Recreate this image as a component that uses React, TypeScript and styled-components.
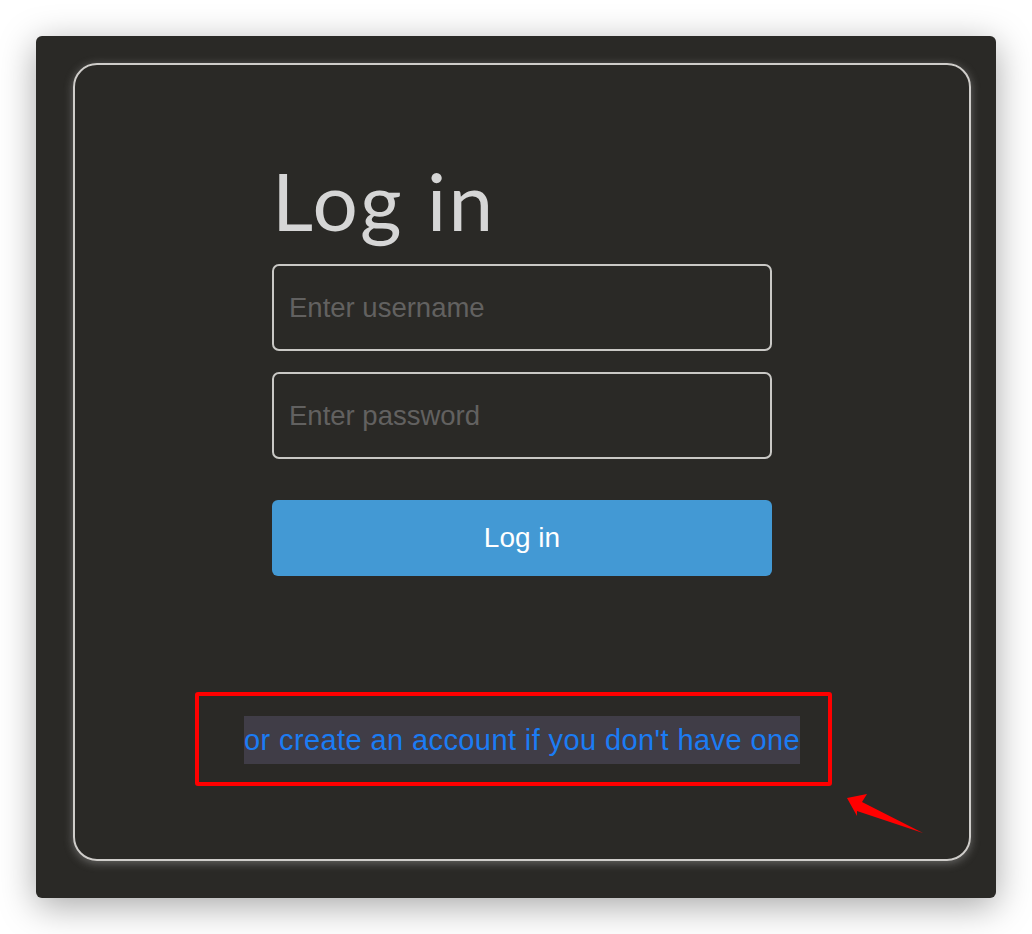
import React from "react";
import styled, { createGlobalStyle } from "styled-components";

const Global = createGlobalStyle`
  html, body { margin: 0; padding: 0; background: #ffffff; }
  body { font-family: "Liberation Sans", Arial, sans-serif; }
  * { box-sizing: border-box; }
`;

const Page = styled.div`
  padding: 36px;
  width: 1032px;
  height: 934px;
`;

const Window = styled.div`
  position: relative;
  width: 960px;
  height: 862px;
  background: #2a2926;
  border-radius: 6px;
  box-shadow: 0 8px 36px rgba(0, 0, 0, 0.35);
  padding: 27px 25px 37px 37px;
`;

const Card = styled.div`
  width: 898px;
  height: 798px;
  border: 2px solid #cfcdca;
  border-radius: 24px;
  box-shadow: 0 2px 10px rgba(220, 220, 220, 0.35);
  display: flex;
  flex-direction: column;
  align-items: center;
  padding-top: 87px;
`;

const Form = styled.form`
  width: 500px;
  display: flex;
  flex-direction: column;
`;

const Title = styled.h1`
  margin: 0 0 16px 0;
  font-family: Lato, "Open Sans", sans-serif;
  font-weight: 400;
  font-size: 80px;
  line-height: 96px;
  color: #d6d6d6;
  letter-spacing: 2.4px;
`;

const Input = styled.input`
  width: 500px;
  height: 87px;
  border: 2px solid #c9c8c5;
  border-radius: 7px;
  background: transparent;
  padding: 0 15px;
  font-family: "Liberation Sans", Arial, sans-serif;
  font-size: 27.5px;
  color: #ddd;
  outline: none;
  margin-bottom: ${(p: { $gap: number }) => p.$gap}px;
  &::placeholder { color: #626160; }
`;

const Button = styled.button`
  width: 500px;
  height: 76px;
  border: none;
  border-radius: 6px;
  background: #4399d4;
  color: #ffffff;
  font-family: "Liberation Sans", Arial, sans-serif;
  font-size: 28px;
  cursor: pointer;
`;

const LinkRow = styled.div`
  margin-top: 140px;
  display: flex;
  justify-content: center;
`;

const Link = styled.a`
  display: inline-block;
  background: #403d47;
  color: #1b7cf4;
  font-family: "Liberation Sans", Arial, sans-serif;
  font-size: 29px;
  letter-spacing: 0.4px;
  line-height: 48px;
  height: 48px;
  text-decoration: none;
  white-space: nowrap;
`;

const Annotation = styled.div`
  position: absolute;
  left: 159px;
  top: 656px;
  width: 637px;
  height: 94px;
  border: 4px solid #ff0000;
  border-radius: 3px;
  pointer-events: none;
`;

const Arrow = styled.svg`
  position: absolute;
  left: 800px;
  top: 750px;
  pointer-events: none;
`;

export default function App() {
  return (
    <>
      <Global />
      <Page>
        <Window>
          <Card>
            <Form onSubmit={(e) => e.preventDefault()}>
              <Title>Log in</Title>
              <Input $gap={21} placeholder="Enter username" />
              <Input $gap={41} type="password" placeholder="Enter password" />
              <Button type="submit">Log in</Button>
            </Form>
            <LinkRow>
              <Link href="#">or create an account if you don't have one</Link>
            </LinkRow>
          </Card>
          <Annotation />
          <Arrow width="100" height="60" viewBox="800 750 100 60">
            <path
              d="M811 762 L831 758 L826 766 L887 797 L821 775 L821 780 Z"
              fill="#ff0000"
            />
          </Arrow>
        </Window>
      </Page>
    </>
  );
}
